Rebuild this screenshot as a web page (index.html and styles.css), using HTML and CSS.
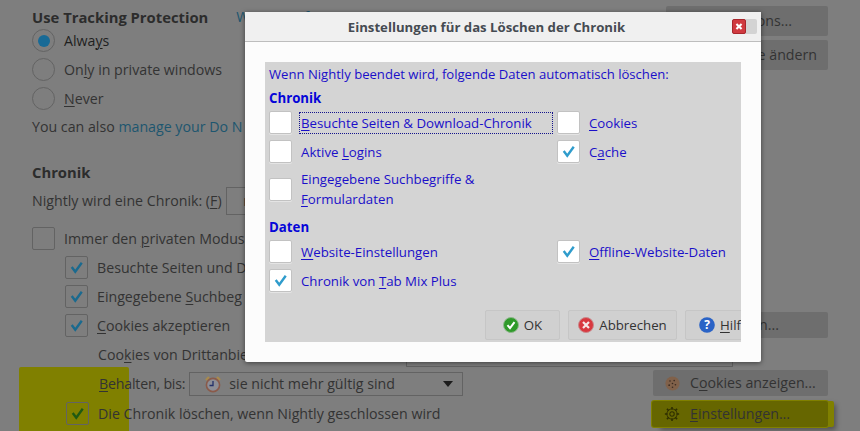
FILE: index.html
```html
<!DOCTYPE html>
<html lang="de">
<head>
<meta charset="utf-8">
<title>Einstellungen</title>
<link rel="stylesheet" href="styles.css">
</head>
<body>
<div class="page">
  <div class="marker"></div>
  <main class="left">
    <div class="heading-row"><h2 class="h">Use Tracking Protection</h2><a class="link learn">Weitere Infos</a></div>
    <div class="row"><span class="radio on"></span><span class="txt strong">Alwa<u>y</u>s</span></div>
    <div class="row"><span class="radio"></span><span>On<u>l</u>y in private windows</span></div>
    <div class="row"><span class="radio"></span><span><u>N</u>ever</span></div>
    <div class="plain also">You can also <a class="link">manage your Do N</a></div>
    <h2 class="h section">Chronik</h2>
    <div class="plain nightly">Nightly wird eine Chronik: (<u>F</u>) <span class="mini-select">n</span></div>
    <div class="row first"><span class="check"></span><span>Immer den <u>p</u>rivaten Modus</span></div>
    <div class="row sub"><span class="check"><svg viewBox="0 0 22 22"><path class="tick" d="M6 10.500l3.700 5L16.500 6"/></svg></span><span>Besuchte Seiten und D</span></div>
    <div class="row sub"><span class="check"><svg viewBox="0 0 22 22"><path class="tick" d="M6 10.500l3.700 5L16.500 6"/></svg></span><span>Eingegebene <u>S</u>uchbeg</span></div>
    <div class="row sub"><span class="check"><svg viewBox="0 0 22 22"><path class="tick" d="M6 10.500l3.700 5L16.500 6"/></svg></span><span><u>C</u>ookies akzeptieren</span></div>
    <div class="row indent third"><span class="third-label">Coo<u>k</u>ies von Drittanbie</span><span class="under-select"></span></div>
    <div class="row indent keep-row">
      <span class="keep"><u>B</u>ehalten, bis:</span>
      <span class="select">
        <svg class="clock" viewBox="0 0 18 18"><path d="M2 5l3-3M16 5l-3-3" stroke="#a98a4c" stroke-width="2.400" fill="none"/><circle cx="9" cy="10" r="6.600" fill="#8d8e96" stroke="#8a5a4a" stroke-width="1.600"/><path d="M9 6v4.500h-3.500" stroke="#23306a" stroke-width="1.300" fill="none"/></svg>
        <span class="select-text">sie nicht mehr gültig sind</span>
        <svg class="caret" viewBox="0 0 10 6"><path d="M0 0h10L5 6z" fill="#1c1c1c"/></svg>
      </span>
    </div>
    <div class="row sub last"><span class="check olive"><svg viewBox="0 0 22 22"><path class="tick" d="M6 10.500l3.700 5L16.500 6"/></svg></span><span>Die Chronik löschen, wenn Ni<u>g</u>htly geschlossen wird</span></div>
  </main>
  <aside class="right">
    <div class="btn b1">Exceptions...</div>
    <div class="btn b2">Farbe ändern</div>
    <div class="btn b3">n...</div>
    <div class="btn b4">
      <svg class="ico" viewBox="0 0 18 18"><circle cx="9" cy="9" r="8.500" fill="#80614a"/><g fill="#3a2a20"><circle cx="6" cy="6" r="1"/><circle cx="11" cy="5.500" r="1"/><circle cx="9" cy="9" r="1"/><circle cx="5" cy="11" r="1"/><circle cx="12.500" cy="10.500" r="1"/><circle cx="9" cy="13.500" r="1"/></g></svg>
      <span>C<u>o</u>okies anzeigen...</span>
    </div>
    <div class="btn b5">
      <svg class="ico gear" viewBox="0 0 18 18"><circle cx="9" cy="9" r="5.800" fill="none" stroke="#2e2e00" stroke-width="1"/><circle cx="9" cy="9" r="2.500" fill="none" stroke="#2e2e00" stroke-width="1.200"/><path d="M9 1v3M9 14v3M1 9h3M14 9h3M3.300 3.300l2.100 2.100M12.600 12.600l2.100 2.100M3.300 14.700l2.100-2.100M12.600 5.400l2.100-2.100" stroke="#2e2e00" stroke-width="1.800"/></svg>
      <span><u>E</u>instellungen...</span>
    </div>
  </aside>
</div>

<section class="modal">
  <header class="titlebar">
    <div class="title">Einstellungen für das Löschen der Chronik</div>
    <div class="close-wrap"><span class="close"><svg viewBox="0 0 14 14"><path d="M4 4l6 6M10 4l-6 6" stroke="#fff" stroke-width="2.400"/></svg></span></div>
  </header>
  <div class="modal-body">
    <div class="panel">
      <div class="intro">Wenn Nightly beendet wird, folgende Daten automatisch löschen:</div>
      <div class="group">Chronik</div>
      <div class="grid">
        <label class="opt"><span class="box"></span><span class="lab focus"><u>B</u>esuchte Seiten &amp; Download-Chronik</span></label>
        <label class="opt"><span class="box"></span><span class="lab"><u>C</u>ookies</span></label>
        <label class="opt"><span class="box"></span><span class="lab">Aktive <u>L</u>ogins</span></label>
        <label class="opt"><span class="box"><svg viewBox="0 0 22 22"><path class="tick" d="M6 10.500l3.700 5L16.500 6"/></svg></span><span class="lab">C<u>a</u>che</span></label>
        <label class="opt"><span class="box"></span><span class="lab two">Eingegebene Suchbegriffe &amp;<br><u>F</u>ormulardaten</span></label>
      </div>
      <div class="group g2">Daten</div>
      <div class="grid">
        <label class="opt"><span class="box"></span><span class="lab"><u>W</u>ebsite-Einstellungen</span></label>
        <label class="opt"><span class="box"><svg viewBox="0 0 22 22"><path class="tick" d="M6 10.500l3.700 5L16.500 6"/></svg></span><span class="lab"><u>O</u>ffline-Website-Daten</span></label>
        <label class="opt"><span class="box"><svg viewBox="0 0 22 22"><path class="tick" d="M6 10.500l3.700 5L16.500 6"/></svg></span><span class="lab">Chronik von <u>T</u>ab Mix Plus</span></label>
      </div>
      <div class="actions">
        <div class="dbtn ok">
          <svg class="dico" viewBox="0 0 16 16"><circle cx="8" cy="8" r="7.500" fill="#2f9a2a" stroke="#8fb88c"/><path d="M4.500 8.200l2.500 3 4.500-6" stroke="#fff" stroke-width="2" fill="none"/></svg>OK
        </div>
        <div class="dbtn cancel">
          <svg class="dico" viewBox="0 0 16 16"><circle cx="8" cy="8" r="7.500" fill="#d8383f" stroke="#c9898c"/><path d="M5 5l6 6M11 5l-6 6" stroke="#f6e7e7" stroke-width="2.200"/></svg>Abbrechen
        </div>
        <div class="dbtn help">
          <svg class="dico" viewBox="0 0 16 16"><circle cx="8" cy="8" r="7.800" fill="#2a63c6"/><text x="8" y="12.300" text-anchor="middle" class="q">?</text></svg><span><u>H</u>ilfe</span>
        </div>
      </div>
    </div>
  </div>
</section>
</body>
</html>
```
FILE: styles.css
```css
* { box-sizing: border-box; }
html, body { margin: 0; height: 431px; overflow: hidden; }
body {
  position: relative;
  background: #7e7e7e;
  color: #333;
  font: 14.200px/20px "Open Sans", "Noto Sans", sans-serif;
}
u { text-underline-offset: 2px; text-decoration-thickness: 1px; }

.page {
  position: relative;
  display: flex;
  justify-content: space-between;
  height: 431px;
  padding-right: 32px;
}
.marker {
  position: absolute;
  left: 19px;
  top: 367px;
  width: 110px;
  height: 64px;
  background: #808000;
  border-radius: 2px 2px 0 0;
}

.left { position: relative; flex: none; width: 470px; padding: 3px 0 0 32px; white-space: nowrap; }
.heading-row { display: flex; height: 23px; align-items: flex-end; gap: 28px; }
.h { margin: 0; font-size: 14.800px; font-weight: 700; color: #2c2c2c; }
.heading-row .h, .learn { margin-bottom: -1px; }
.link { color: #1d566f; }
.row { display: flex; align-items: center; height: 29px; gap: 9px; }
.strong { color: #1f1f1f; }
.radio {
  flex: none;
  width: 23px;
  height: 23px;
  border: 1px solid #636363;
  border-radius: 50%;
  display: flex;
  align-items: center;
  justify-content: center;
}
.radio.on::after {
  content: "";
  width: 12px;
  height: 12px;
  border-radius: 50%;
  background: #186a96;
}
.plain { height: 19px; display: flex; align-items: center; white-space: pre; }
.also { margin-top: 4px; }
.section { margin-top: 26px; line-height: 20px; }
.nightly { margin-top: 9px; }
.mini-select { display: inline-flex; align-items: center; width: 60px; height: 28px; margin-left: 1px; padding-left: 16px; border: 1px solid #636363; }
.first { margin-top: 14px; }
.check {
  flex: none;
  width: 23px;
  height: 23px;
  border: 1px solid #636363;
  border-radius: 2px;
}
.check svg, .box svg { display: block; width: 100%; height: 100%; }
.tick { fill: none; stroke: #1a6a8f; stroke-width: 2.500; }
.box .tick { stroke: #2f9ccc; }
.olive { margin-left: 1px; }
.olive .tick { stroke: #1f5a12; }
.sub { padding-left: 33px; }
.indent { padding-left: 66px; }
.third { gap: 0; }
.third-label { flex: none; width: 308px; }
.under-select { flex: none; width: 327px; height: 25px; border: 1px solid #636363; }
.keep-row { gap: 4px; }
.last { height: 31px; padding-left: 33px; gap: 9px; }
.keep { padding-left: 1px; letter-spacing: -.2px; }
.select {
  flex: none;
  display: flex;
  align-items: center;
  width: 274px;
  height: 24px;
  border: 1px solid #636363;
  padding: 0 9px 0 14px;
  gap: 7px;
}
.clock { width: 18px; height: 18px; flex: none; }
.select-text { flex: 1; }
.caret { width: 10px; height: 6px; flex: none; }

.right { position: relative; display: flex; flex-direction: column; align-items: flex-end; padding-top: 6px; }
.btn {
  display: flex;
  align-items: center;
  height: 26px;
  background: #6e6e6e;
  border-radius: 2px;
  padding: 0 10px;
  white-space: nowrap;
}
.b1 { width: 162px; height: 30px; justify-content: flex-end; padding-right: 36px; }
.b2 { width: 162px; height: 30px; margin-top: 4px; justify-content: flex-end; padding-right: 11px; }
.b3 { width: 162px; margin-top: 242px; justify-content: flex-end; padding-right: 49px; }
.b4 { width: 175px; margin-top: 32px; gap: 10px; padding-left: 12px; }
.b5 {
  width: 176px;
  margin-top: 5px;
  gap: 10px;
  padding-left: 12px;
  background: #666600;
  box-shadow: 6px 0 0 #808000, 0 0 0 1px #808000, 8px 3px 5px rgba(0, 0, 0, .35);
}
.ico { width: 15px; height: 15px; flex: none; }
.gear { width: 16px; height: 16px; }

.modal {
  position: absolute;
  left: 245px;
  top: 12px;
  width: 516px;
  height: 350px;
  background: #fcfcfc;
  box-shadow: 0 1px 5px rgba(0, 0, 0, .5);
  border-radius: 0 0 2px 2px;
}
.titlebar {
  display: flex;
  align-items: center;
  height: 30px;
  padding: 0 4px 0 0;
  background: #f0f0f0;
  border-bottom: 1px solid #bdbdbd;
}
.title {
  flex: 1;
  padding-right: 4px;
  text-align: center;
  font-size: 13.200px;
  font-weight: 700;
  color: #454b52;
}
.close-wrap { width: 25px; height: 15px; background: #d3d3d3; border-radius: 2px; }
.close { display: block; width: 14px; height: 15px; background: #d03a40; border: 1px solid #a8262c; border-radius: 2px; }
.close svg { display: block; width: 100%; height: 100%; }
.modal-body { padding: 20px; }
.panel {
  height: 280px;
  overflow: hidden;
  background: #d4d4d4;
  padding-left: 4px;
  color: #1a0fc9;
  font-size: 13.250px;
}
.intro { height: 24px; line-height: 24px; white-space: nowrap; font-size: 13.100px; }
.group { height: 25px; line-height: 24px; font-weight: 700; color: #0505d8; }
.g2 { height: 25px; margin-top: 6px; }
.grid { display: grid; grid-template-columns: 288px 1fr; row-gap: 6px; }
.opt { display: flex; align-items: center; gap: 8px; min-height: 23px; }
.box {
  flex: none;
  width: 23px;
  height: 23px;
  background: #fff;
  border: 1px solid #c2c2c2;
  border-radius: 2px;
  box-shadow: 0 1px 0 #e4e4e4;
}
.lab { flex: 1; white-space: nowrap; padding-left: 1px; }
.focus { margin-right: 5px; line-height: 20px; outline: 1px dotted #14148c; }
.two { line-height: 20px; }
.actions { display: flex; gap: 8px; margin: 18px 0 0 216px; color: #333; }
.dbtn {
  flex: none;
  display: flex;
  align-items: center;
  justify-content: center;
  gap: 5px;
  height: 30px;
  background: #d0d0d0;
  border: 1px solid #c6c6c6;
  border-radius: 2px;
}
.dico { width: 16px; height: 16px; flex: none; }
.ok { width: 75px; }
.cancel { width: 109px; }
.help { width: 75px; justify-content: flex-start; padding-left: 13px; }
.q { font: 700 12px "Open Sans", sans-serif; fill: #fff; }
```
